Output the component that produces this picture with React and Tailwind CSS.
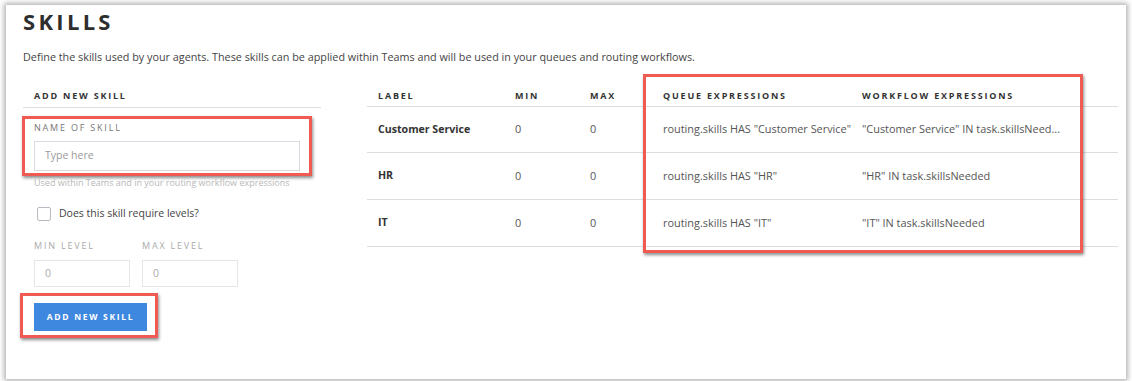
import React from "react";

const skills = [
  {
    label: "Customer Service",
    min: "0",
    max: "0",
    queue: 'routing.skills HAS "Customer Service"',
    workflow: '"Customer Service" IN task.skillsNeed...',
    h: "h-[46px]",
  },
  {
    label: "HR",
    min: "0",
    max: "0",
    queue: 'routing.skills HAS "HR"',
    workflow: '"HR" IN task.skillsNeeded',
    h: "h-[47px]",
  },
  {
    label: "IT",
    min: "0",
    max: "0",
    queue: 'routing.skills HAS "IT"',
    workflow: '"IT" IN task.skillsNeeded',
    h: "h-[47px]",
  },
];

const headers = ["LABEL", "MIN", "MAX", "QUEUE EXPRESSIONS", "WORKFLOW EXPRESSIONS"];

const AddSkillForm = () => (
  <div className="w-[298px]">
    <div className="border-b border-[#dcdde3] py-[5px] pl-[11px] text-[9px] font-bold leading-[12px] tracking-[0.2em] text-[#333]">
      ADD NEW SKILL
    </div>

    {/* annotated name field */}
    <div className="-ml-px mt-[8px] w-[290px] border-[3px] border-[#ef5a52] px-[9px] pb-[2px] pt-[3px] shadow-[1px_2px_3px_rgba(0,0,0,0.45)]">
      <div className="text-[9px] leading-[12px] tracking-[0.2em] text-[#777]">
        NAME OF SKILL
      </div>
      <div className="mt-[7px] flex h-[30px] items-center border border-[#d9dae2] pl-[10px] text-[10.5px] text-[#9a9a9a]">
        Type here
      </div>
    </div>
    <p className="ml-[11px] mt-[1px] text-[9px] leading-[12px] text-[#b8b8b8]">
      Used within Teams and in your routing workflow expressions
    </p>

    <div className="ml-[14px] mt-[17px] flex h-[16px] items-center gap-[8px]">
      <div className="h-[14px] w-[14px] rounded-[2px] border border-[#b9bac2] bg-white" />
      <span className="text-[10.5px] text-[#444]">Does this skill require levels?</span>
    </div>

    <div className="ml-[11px] mt-[18px] grid grid-cols-[96px_96px] gap-x-[12px]">
      <div className="text-[9px] leading-[12px] tracking-[0.2em] text-[#aaa]">MIN LEVEL</div>
      <div className="text-[9px] leading-[12px] tracking-[0.2em] text-[#aaa]">MAX LEVEL</div>
      <div className="mt-[8px] flex h-[27px] items-center border border-[#e6e6ea] pl-[10px] text-[10.5px] text-[#aaa]">
        0
      </div>
      <div className="mt-[8px] flex h-[27px] items-center border border-[#e6e6ea] pl-[10px] text-[10.5px] text-[#aaa]">
        0
      </div>
    </div>

    {/* annotated button */}
    <div className="-ml-[3px] mt-[6px] w-[138px] border-[3px] border-[#ef5a52] pb-[4px] pl-[11px] pr-[8px] pt-[7px] shadow-[1px_2px_3px_rgba(0,0,0,0.45)]">
      <button className="flex h-[28px] w-[113px] items-center justify-center bg-[#3e88e0] text-[8.5px] font-bold tracking-[0.2em] text-white">
        ADD NEW SKILL
      </button>
    </div>
  </div>
);

const SkillsTable = () => (
  <div className="relative flex-1">
    <div className="grid h-[22px] grid-cols-[137px_75px_73px_199px_1fr] items-center border-b border-[#dcdde3] text-[9px] font-bold leading-[12px] tracking-[0.2em] text-[#333]">
      {headers.map((h) => (
        <div key={h} className="pl-[11px]">
          {h}
        </div>
      ))}
    </div>
    {skills.map((s) => (
      <div
        key={s.label}
        className={`grid ${s.h} grid-cols-[137px_75px_73px_199px_1fr] items-center border-b border-[#dcdde3] text-[10.9px] text-[#555]`}
      >
        <div className="pl-[11px] text-[10.6px] font-bold text-[#333]">{s.label}</div>
        <div className="pl-[11px]">{s.min}</div>
        <div className="pl-[11px]">{s.max}</div>
        <div className="whitespace-nowrap pl-[11px]">{s.queue}</div>
        <div className="whitespace-nowrap pl-[11px]">{s.workflow}</div>
      </div>
    ))}

    {/* annotation around the expression columns */}
    <div className="pointer-events-none absolute left-[276px] top-[-11px] h-[179px] w-[440px] border-[3px] border-[#ef5a52] shadow-[1px_2px_3px_rgba(0,0,0,0.45)]" />
  </div>
);

export default function App() {
  return (
    <div className="h-[381px] w-[1132px] overflow-hidden bg-white pl-[6px] pr-[6px] pt-[5px] font-['Open_Sans',sans-serif]">
      <div className="h-[374px] bg-white pl-[17px] pr-[8px] pt-[2px] shadow-[0_0_5px_2px_rgba(0,0,0,0.3)]">
        <h1 className="text-[22px] font-bold leading-[28px] tracking-[0.15em] text-[#2e2e2e]">
          SKILLS
        </h1>
        <p className="mt-[14px] text-[10.8px] leading-[16px] text-[#444]">
          Define the skills used by your agents. These skills can be applied within Teams and will
          be used in your queues and routing workflows.
        </p>
        <div className="mt-[20px] flex gap-[46px]">
          <AddSkillForm />
          <SkillsTable />
        </div>
      </div>
    </div>
  );
}
